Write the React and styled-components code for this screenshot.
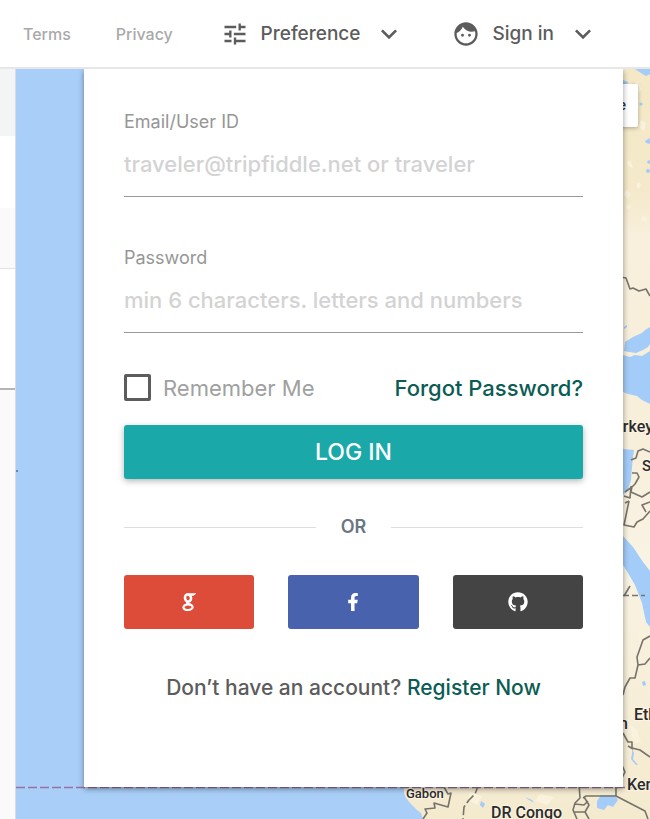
import React from 'react'
import styled, { createGlobalStyle } from 'styled-components'
import { MdTune, MdFace, MdKeyboardArrowDown } from 'react-icons/md'
import { FaFacebookF, FaGithub } from 'react-icons/fa'

const GlobalStyle = createGlobalStyle`
  * {
    box-sizing: border-box;
  }
  body {
    margin: 0;
    font-family: Inter, 'Liberation Sans', sans-serif;
    color: #5c5c5c;
    background: #fafafa;
  }
`

const Page = styled.div`
  display: flex;
  flex-direction: column;
  min-height: 100vh;
`

const Header = styled.header`
  display: flex;
  align-items: center;
  justify-content: space-between;
  height: 69px;
  padding: 0 51px 0 23px;
  background: #fff;
  border-bottom: 2px solid #e6e7e9;
`

const HeaderGroup = styled.nav`
  display: flex;
  align-items: center;
  gap: ${props => props.$gap};
`

const HeaderLink = styled.a`
  font-size: 16px;
  font-weight: 500;
  color: #a9a9a9;
  text-decoration: none;
`

const MenuButton = styled.button`
  display: flex;
  align-items: center;
  padding: 0;
  border: 0;
  background: none;
  font: inherit;
  font-size: 19px;
  font-weight: 500;
  line-height: 24px;
  color: #5c5c5c;
  cursor: pointer;
`

const MenuLabel = styled.span`
  margin: 0 13px 0 12px;
`

const Main = styled.main`
  display: flex;
  flex: 1;
`

const Sidebar = styled.aside`
  display: flex;
  flex-direction: column;
  width: 16px;
  border-right: 1px solid #d9dde3;
`

const SidebarBlock = styled.div`
  height: ${props => props.$height};
  background: ${props => props.$color};
  border-bottom: ${props => props.$line || 'none'};
`

const MapArea = styled.section`
  position: relative;
  flex: 1;
  padding: 0 27px 32px 68px;
  background: #a9cff9;
  overflow: hidden;
`

const MapDrawing = styled.svg`
  position: absolute;
  top: 0;
  right: 0;
  width: 100%;
  height: 100%;
  font-family: Roboto, sans-serif;
  font-weight: 500;
`

const Panel = styled.form`
  position: relative;
  padding: 41px 40px 87px;
  background: #fff;
  box-shadow: 0 2px 6px rgba(0, 0, 0, 0.4);
`

const Field = styled.div`
  display: flex;
  flex-direction: column;
  margin-bottom: ${props => props.$last ? '41px' : '49px'};
`

const FieldLabel = styled.label`
  font-size: 18px;
  line-height: 24px;
  color: #969696;
`

const FieldInput = styled.input`
  height: 63px;
  padding: 0 0 2px;
  border: 0;
  border-bottom: 1px solid #999;
  border-radius: 0;
  outline: 0;
  background: none;
  font: inherit;
  font-size: 22px;
  font-weight: 500;
  color: #5c5c5c;
  &::placeholder {
    color: #d3d3d3;
    opacity: 1;
  }
`

const Options = styled.div`
  display: flex;
  align-items: center;
  justify-content: space-between;
  height: 27px;
  margin-bottom: 24px;
  font-size: 22px;
`

const Remember = styled.label`
  display: flex;
  align-items: center;
  gap: 12px;
  color: #a0a0a0;
`

const Checkbox = styled.input`
  appearance: none;
  width: 27px;
  height: 27px;
  margin: 0;
  border: 3px solid #5c5c5c;
  border-radius: 2px;
  background: #fff;
  &:checked {
    background: #1aa8a8;
  }
`

const TextLink = styled.a`
  color: #0b5c53;
  font-weight: 500;
  text-decoration: none;
`

const LoginButton = styled.button`
  width: 100%;
  height: 54px;
  border: 0;
  border-radius: 3px;
  background: #1aa8a9;
  box-shadow: 0 2px 6px rgba(0, 0, 0, 0.3);
  font: inherit;
  font-size: 23px;
  font-weight: 500;
  color: #fff;
  cursor: pointer;
`

const Divider = styled.div`
  display: flex;
  align-items: center;
  gap: 25px;
  margin: 36px 0;
  font-size: 18px;
  font-weight: 600;
  line-height: 24px;
  color: #6b7684;
  &::before,
  &::after {
    content: '';
    flex: 1;
    height: 1px;
    background: #dcdfe2;
  }
`

const SocialRow = styled.div`
  display: flex;
  gap: 34px;
`

const SocialButton = styled.button`
  display: flex;
  flex: 1;
  align-items: center;
  justify-content: center;
  height: 54px;
  padding: 0;
  border: 0;
  border-radius: 3px;
  background: ${props => props.$color};
  color: #fff;
  cursor: pointer;
`

const RegisterText = styled.p`
  margin: 47px 0 0;
  font-size: 21px;
  font-weight: 500;
  line-height: 24px;
  text-align: center;
`

const GoogleLogo = () => (
  <svg width="14" height="20" viewBox="0 0 14 20" fill="none" stroke="#fff" aria-hidden="true">
    <ellipse cx="6" cy="6" rx="3" ry="3.6" strokeWidth="2.6" transform="rotate(-14 6 6)" />
    <path d="M6.4 1.9h6.4l-1.8 1.2H8" strokeWidth="1.4" />
    <path d="M5.600 9.800c-1.600 1.600 1.400 2 3.400 3.400" strokeWidth="2.4" />
    <ellipse cx="6" cy="15.200" rx="4.600" ry="2.800" strokeWidth="2.2" transform="rotate(-5 6 15)" />
  </svg>
)

const border = { fill: 'none', stroke: '#77736c', strokeWidth: 1.6, strokeLinejoin: 'round' }

const WorldMap = () => (
  <MapDrawing viewBox="16 69 634 750" preserveAspectRatio="xMaxYMin slice" aria-hidden="true">
    <defs>
      <linearGradient id="land" x1="0" y1="0" x2="0" y2="1">
        <stop offset="0" stopColor="#f4e8c6" />
        <stop offset="0.16" stopColor="#f4e9ca" />
        <stop offset="0.22" stopColor="#f8efdc" />
        <stop offset="0.5" stopColor="#f7efda" />
        <stop offset="0.65" stopColor="#f9f3e4" />
        <stop offset="1" stopColor="#f4eace" />
      </linearGradient>
    </defs>
    <path
      fill="url(#land)"
      d="M600 69H650V819H423L421 813L417 810L411 804L406 798L404 793L404 786L500 780H600Z"
    />
    {/* forests and light patches */}
    <g fill="#faf2dc">
      <path d="M628 80l6 5 3-4 5 8-4 4-7-6zM640 120l6 3-2 8-5-4zM626 190l5 4-3 4-4-3zM627 160l4 2 2 6-5-2zM642 215l5 2-1 6-5-3zM626 205l5 1-1 3-4-1zM638 182l3 2-2 5-3-2z" />
      <path d="M630 725l7 5 4 12-8 2zM640 630l6 4-3 10-4-5zM470 792l12 4-5 9-9-5zM540 794l14 3-7 8-12-4z" />
    </g>
    {/* seas and lakes */}
    <g fill="#a4ccf8">
      <path d="M635 69H650V74L646 76L641 73ZM623 80l5 2-1 2h-4zM645 141l5-3v6l-4-1z" />
      <circle cx="641" cy="104" r="1.6" />
      <circle cx="649" cy="162" r="1.8" />
      <circle cx="648" cy="171" r="2" />
      <path d="M624 327l3-2v2l-3 2z" />
      <path d="M625 342L633 337L642 333L645 330L650 327V344L648 347L643 350L636 353L629 352L624 351Z" />
      <path d="M623 355L630 357L635 355L642 356L650 351V404L642 400L637 396L628 394L623 392Z" />
      <path d="M623 449L634 450L633 457L632 467L631 480L628 490L623 495Z" />
      <path d="M623 536L633 547L643 562L650 571V627L646 622L642 603L635 585L628 573L623 565Z" />
      <path d="M642 682l3-1 1 4-3 1zM632 749l2 4-1 6 5 6-2 0-5-6 1-5z" />
      <path d="M601 795H615L618 800L613 807L608 805L604 810L597 808L597 801Z" />
      <path d="M481 801l4 3-2 4-3-3zM525 797l7 3 2 3-5-3z" />
    </g>
    <g {...border}>
      <path d="M620 277L626 278L630 289L633 288L639 291L646 289L650 296" />
      <path d="M631 460L636 458L638 451L643 449L650 452" />
      <path d="M632 473L637 473L639 477L635 484L632 487L625 492M632 486L631 492L642 497L650 492M631 486L630 498L624 496M625 503L629 501" />
      <path d="M629 501L624 525L634 527L637 522L643 519L650 511M650 502L642 505L646 512" />
      <path d="M624 596L630 586" />
      <path d="M623 595.500H645" strokeDasharray="6 3" />
      <path d="M650 636L643 640L637 657L638 665L635 678L630 678L625 687L623 695M638 665L645 664L650 658" />
      <path d="M623 733L628 742L632 742L632 748L640 750L650 757M628 746L633 749M621 763L625 772L621 780" />
      <path d="M444 787L448 794L451 793L448 807L434 803L435 808L425 809L427 813L423 819" />
      <path d="M479 784L475 794L469 800L464 807L463 819" strokeDasharray="10 3" />
      <path d="M579 784L580 798L575 803L573 810L577 819M575 804L584 805L588 801M583 798L586 796H616V787M584 797L589 805L585 812L589 819M574 812L585 812M616 796L645 811L648 819" />
    </g>
    <path d="M16 787.500H650" stroke="#9b6f9e" strokeWidth="1.500" strokeDasharray="9 3" />
    <path d="M16 470h2v2h-2z" fill="#6f86a3" />
    <rect x="560" y="84" width="78" height="43" rx="2" fill="#fff" filter="drop-shadow(0 1px 2px rgba(0,0,0,.3))" />
    <text x="626" y="110" fontSize="15" textAnchor="end" fill="#333">Satellite</text>
    <g fill="#2b2b2b" stroke="#fbf4e4" strokeWidth="2" paintOrder="stroke">
      <text x="653" y="432" fontSize="16" textAnchor="end">Turkey</text>
      <text x="642" y="471" fontSize="15">Syria</text>
      <text x="634" y="720" fontSize="16">Ethiopia</text>
      <text x="628" y="729" fontSize="16" textAnchor="end">Sudan</text>
      <text x="627" y="790" fontSize="16">Kenya</text>
      <text x="406" y="798" fontSize="13">Gabon</text>
      <text x="491" y="818" fontSize="16">DR Congo</text>
    </g>
  </MapDrawing>
)

const socials = [
  { name: 'Google', color: '#dd4b39', icon: <GoogleLogo /> },
  { name: 'Facebook', color: '#4862ad', icon: <FaFacebookF size={18} /> },
  { name: 'GitHub', color: '#444', icon: <FaGithub size={20} /> },
]

const App = () => (
  <Page>
    <GlobalStyle />
    <Header>
      <HeaderGroup $gap="45px">
        <HeaderLink href="#terms">Terms</HeaderLink>
        <HeaderLink href="#privacy">Privacy</HeaderLink>
      </HeaderGroup>
      <HeaderGroup $gap="47px">
        <MenuButton type="button">
          <MdTune size={28} />
          <MenuLabel>Preference</MenuLabel>
          <MdKeyboardArrowDown size={32} />
        </MenuButton>
        <MenuButton type="button">
          <MdFace size={28} />
          <MenuLabel>Sign in</MenuLabel>
          <MdKeyboardArrowDown size={32} />
        </MenuButton>
      </HeaderGroup>
    </Header>
    <Main>
      <Sidebar>
        <SidebarBlock $height="67px" $color="#f3f4f6" />
        <SidebarBlock $height="72px" $color="#fff" />
        <SidebarBlock $height="61px" $color="#fafafa" $line="1px solid #e2e2e2" />
        <SidebarBlock $height="121px" $color="#fff" $line="2px solid #b5b5b5" />
      </Sidebar>
      <MapArea>
        <WorldMap />
        <Panel>
          <Field>
            <FieldLabel htmlFor="email">Email/User ID</FieldLabel>
            <FieldInput id="email" type="text" placeholder="traveler@tripfiddle.net or traveler" />
          </Field>
          <Field $last>
            <FieldLabel htmlFor="password">Password</FieldLabel>
            <FieldInput id="password" type="password" placeholder="min 6 characters. letters and numbers" />
          </Field>
          <Options>
            <Remember>
              <Checkbox type="checkbox" />
              Remember Me
            </Remember>
            <TextLink href="#forgot">Forgot Password?</TextLink>
          </Options>
          <LoginButton type="button">LOG IN</LoginButton>
          <Divider>OR</Divider>
          <SocialRow>
            {socials.map(social => (
              <SocialButton key={social.name} type="button" $color={social.color} aria-label={social.name}>
                {social.icon}
              </SocialButton>
            ))}
          </SocialRow>
          <RegisterText>
            Don’t have an account? <TextLink href="#register">Register Now</TextLink>
          </RegisterText>
        </Panel>
      </MapArea>
    </Main>
  </Page>
)

export default App
